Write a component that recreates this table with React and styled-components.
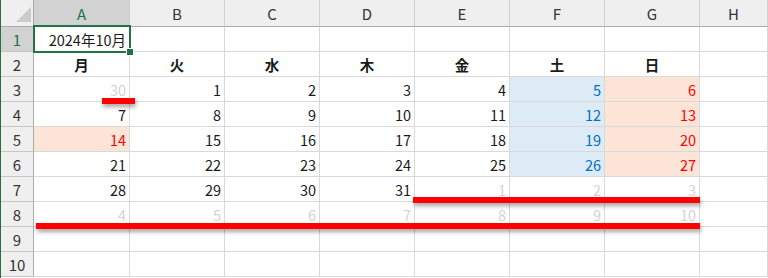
import React from "react";
import styled, { createGlobalStyle, css } from "styled-components";

const Global = createGlobalStyle`
  html, body { margin: 0; padding: 0; background: #fff; }
  body { font-family: "Noto Sans CJK JP", "Noto Sans", sans-serif; overflow: hidden; }
  * { box-sizing: border-box; }
`;

const Frame = styled.div`
  display: flex;
  width: 768px;
  height: 278px;
  overflow: hidden;
`;

const GreenEdge = styled.div`
  width: 1px;
  flex: none;
  background: #217346;
`;

const Sheet = styled.div`
  position: relative;
  flex: 1;
  display: grid;
  grid-template-columns: 33px 96px repeat(6, 95px) 1fr;
  grid-template-rows: 27px repeat(10, 25px);
  align-content: start;
`;

const Corner = styled.div`
  background: #efefef;
  border-right: 1px solid #ababab;
  border-bottom: 1px solid #ababab;
  display: flex;
  align-items: flex-end;
  justify-content: flex-end;
  padding: 0 2px 4px 0;
`;

const Triangle = styled.div`
  width: 0;
  height: 0;
  border-left: 15px solid transparent;
  border-bottom: 15px solid #cbcbcb;
`;

const ColHead = styled.div`
  background: ${(p) => (p.$active ? "#d2d2d2" : "#efefef")};
  color: ${(p) => (p.$active ? "#217346" : "#333")};
  border-right: 1px solid #d0d0d0;
  border-bottom: 1px solid ${(p) => (p.$active ? "#217346" : "#ababab")};
  display: flex;
  align-items: center;
  justify-content: center;
  font-size: 15px;
  padding-top: 1px;
`;

const RowHead = styled.div`
  background: ${(p) => (p.$active ? "#d2d2d2" : "#efefef")};
  color: ${(p) => (p.$active ? "#217346" : "#333")};
  border-right: 1px solid #ababab;
  border-bottom: 1px solid #c6c6c6;
  display: flex;
  align-items: center;
  justify-content: center;
  font-size: 15px;
`;

const Cell = styled.div`
  position: relative;
  border-right: 1px solid #d9d9d9;
  border-bottom: 1px solid #d9d9d9;
  background: ${(p) => p.$bg || "#fff"};
  color: ${(p) => p.$color || "#1a1a1a"};
  font-size: 14.5px;
  font-weight: ${(p) => (p.$bold ? 700 : 400)};
  display: flex;
  align-items: center;
  justify-content: ${(p) => (p.$center ? "center" : "flex-end")};
  padding: 1px 3px 0 3px;
  white-space: nowrap;
  ${(p) =>
    p.$selected &&
    css`
      z-index: 2;
      &::before {
        content: "";
        position: absolute;
        left: -1px;
        top: -2px;
        right: -2px;
        bottom: -2px;
        border: 2px solid #217346;
      }
      &::after {
        content: "";
        position: absolute;
        right: -4px;
        bottom: -4px;
        width: 6px;
        height: 6px;
        background: #217346;
        outline: 1px solid #fff;
      }
    `}
`;

const RedLine = styled.div`
  position: absolute;
  height: 6px;
  background: #ff0000;
  box-shadow: 1px 3px 4px rgba(0, 0, 0, 0.35);
  z-index: 3;
`;

const BLUE_BG = "#ddebf7";
const PEACH_BG = "#fce4d6";
const BLUE = "#0070c0";
const RED = "#ff0000";
const GRAY = "#d3d3d3";

const cols = ["A", "B", "C", "D", "E", "F", "G", "H"];
const days = ["月", "火", "水", "木", "金", "土", "日"];

const weekRows = [
  [{ v: 30, g: 1 }, 1, 2, 3, 4, 5, 6],
  [7, 8, 9, 10, 11, 12, 13],
  [{ v: 14, h: 1 }, 15, 16, 17, 18, 19, 20],
  [21, 22, 23, 24, 25, 26, 27],
  [28, 29, 30, 31, { v: 1, g: 1 }, { v: 2, g: 1 }, { v: 3, g: 1 }],
  [4, 5, 6, 7, 8, 9, 10].map((v) => ({ v, g: 1 })),
];

function dayCell(item, ci) {
  const d = typeof item === "object" ? item : { v: item };
  let bg;
  let color;
  if (d.g) {
    color = GRAY;
  } else if (d.h || ci === 6) {
    bg = PEACH_BG;
    color = RED;
  } else if (ci === 5) {
    bg = BLUE_BG;
    color = BLUE;
  }
  return { value: d.v, bg, color };
}

const lines = [
  { left: 101, top: 98, width: 33 },
  { left: 412, top: 197, width: 287 },
  { left: 35, top: 223, width: 664 },
];

export default function App() {
  const rows = [];
  rows.push(
    <React.Fragment key="r1">
      <RowHead $active>1</RowHead>
      <Cell $selected>2024年10月</Cell>
      {cols.slice(1).map((c) => (
        <Cell key={c} />
      ))}
    </React.Fragment>
  );
  rows.push(
    <React.Fragment key="r2">
      <RowHead>2</RowHead>
      {days.map((d) => (
        <Cell key={d} $center $bold>
          {d}
        </Cell>
      ))}
      <Cell />
    </React.Fragment>
  );
  weekRows.forEach((week, wi) => {
    rows.push(
      <React.Fragment key={`w${wi}`}>
        <RowHead>{wi + 3}</RowHead>
        {week.map((item, ci) => {
          const c = dayCell(item, ci);
          return (
            <Cell key={ci} $bg={c.bg} $color={c.color}>
              {c.value}
            </Cell>
          );
        })}
        <Cell />
      </React.Fragment>
    );
  });
  [9, 10].forEach((n) => {
    rows.push(
      <React.Fragment key={`e${n}`}>
        <RowHead>{n}</RowHead>
        {cols.map((c) => (
          <Cell key={c} />
        ))}
      </React.Fragment>
    );
  });

  return (
    <>
      <Global />
      <Frame>
        <GreenEdge />
        <Sheet>
          <Corner>
            <Triangle />
          </Corner>
          {cols.map((c) => (
            <ColHead key={c} $active={c === "A"}>
              {c}
            </ColHead>
          ))}
          {rows}
          {lines.map((l, i) => (
            <RedLine key={i} style={{ left: l.left, top: l.top, width: l.width }} />
          ))}
        </Sheet>
      </Frame>
    </>
  );
}
